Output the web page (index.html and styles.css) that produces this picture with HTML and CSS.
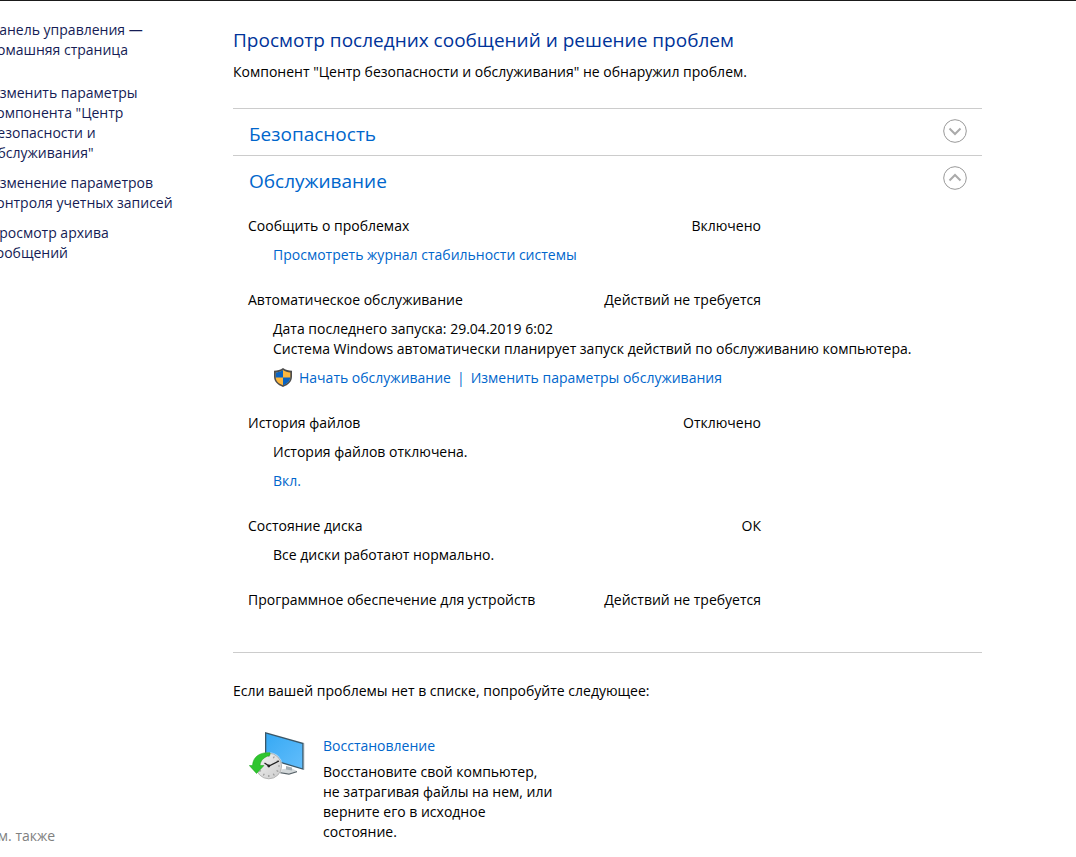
FILE: index.html
```html
<!DOCTYPE html>
<html lang="ru">
<head>
  <meta charset="UTF-8">
  <meta name="viewport" content="width=device-width, initial-scale=1.0">
  <title>Центр безопасности и обслуживания</title>
  <link rel="stylesheet" href="styles.css">
</head>
<body>
  <div class="page">
    <aside class="sidebar">
      <nav class="side-nav">
        <a href="#" class="home-link">Панель управления —<br>домашняя страница</a>
        <a href="#">Изменить параметры<br>компонента "Центр<br>безопасности и<br>обслуживания"</a>
        <a href="#">Изменение параметров<br>контроля учетных записей</a>
        <a href="#">Просмотр архива<br>сообщений</a>
      </nav>
      <p class="see-also">См. также</p>
    </aside>

    <main class="content">
      <h1>Просмотр последних сообщений и решение проблем</h1>
      <p class="intro">Компонент "Центр безопасности и обслуживания" не обнаружил проблем.</p>

      <section class="group">
        <div class="group-header">
          <h2>Безопасность</h2>
          <button type="button" class="toggle" aria-label="Развернуть" aria-expanded="false">
            <svg viewBox="0 0 24 24" width="24" height="24">
              <circle cx="12" cy="12" r="11.3" />
              <path d="M6.5 9.5l5.5 5.5 5.5-5.5" />
            </svg>
          </button>
        </div>
      </section>

      <section class="group">
        <div class="group-header">
          <h2>Обслуживание</h2>
          <button type="button" class="toggle" aria-label="Свернуть" aria-expanded="true">
            <svg viewBox="0 0 24 24" width="24" height="24">
              <circle cx="12" cy="12" r="11.3" />
              <path d="M6.5 14.5l5.5-5.5 5.5 5.5" />
            </svg>
          </button>
        </div>
        <div class="group-body">
          <div class="item">
            <div class="item-row"><h3>Сообщить о проблемах</h3><span>Включено</span></div>
            <p class="item-text"><a href="#">Просмотреть журнал стабильности системы</a></p>
          </div>
          <div class="item">
            <div class="item-row"><h3>Автоматическое обслуживание</h3><span>Действий не требуется</span></div>
            <p class="item-text">Дата последнего запуска: 29.04.2019 6:02<br>Система Windows автоматически планирует запуск действий по обслуживанию компьютера.</p>
            <p class="item-text item-links">
              <svg class="shield" viewBox="0 0 20 20" width="20" height="20">
                <path fill="#4d4d4d" d="M10 0C7.500 1.800 4.500 2.800 1 2.800v5.700c0 5 3.500 8.300 9 10.500 5.500-2.200 9-5.500 9-10.500V2.800c-3.500 0-6.500-1-9-2.800z" />
                <path fill="#fdb73e" d="M10 2C7.800 3.400 5.300 4.200 2.700 4.400V9c0 4 2.700 6.500 7.300 8.300 4.600-1.800 7.300-4.300 7.300-8.300V4.400C14.700 4.200 12.200 3.400 10 2z" />
                <path fill="#0a63c2" d="M10 2C7.800 3.400 5.300 4.200 2.700 4.400V9.500H10zM10 9.500h7.300c-.3 3.700-2.900 6.100-7.300 7.800z" />
              </svg>
              <a href="#">Начать обслуживание</a>
              <span class="divider">|</span>
              <a href="#">Изменить параметры обслуживания</a>
            </p>
          </div>
          <div class="item">
            <div class="item-row"><h3>История файлов</h3><span>Отключено</span></div>
            <p class="item-text">История файлов отключена.</p>
            <p class="item-text"><a href="#">Вкл.</a></p>
          </div>
          <div class="item">
            <div class="item-row"><h3>Состояние диска</h3><span>ОК</span></div>
            <p class="item-text">Все диски работают нормально.</p>
          </div>
          <div class="item">
            <div class="item-row"><h3>Программное обеспечение для устройств</h3><span>Действий не требуется</span></div>
          </div>
        </div>
      </section>

      <section class="more">
        <p>Если вашей проблемы нет в списке, попробуйте следующее:</p>
        <div class="recovery">
          <svg class="recovery-icon" viewBox="0 0 56 50" width="56" height="50">
            <defs>
              <linearGradient id="screen" x1="0" y1="0" x2="1" y2="1">
                <stop offset="0" stop-color="#36a9f4" />
                <stop offset="1" stop-color="#62bdfb" />
              </linearGradient>
              <linearGradient id="dial" x1="0" y1="0" x2="1" y2="1">
                <stop offset="0" stop-color="#f4f4f4" />
                <stop offset="1" stop-color="#cccccc" />
              </linearGradient>
            </defs>
            <path fill="#d3d8da" d="M31 37.500l11-1.500 6 3-8 2.500-9-1.500z" />
            <path fill="#59646a" d="M31 40l9 1.500 8-2.500v1.300l-8 2.500-9-1.500z" />
            <path fill="#a5afb4" d="M37 34l6 1.500v3l-6-1z" />
            <path fill="#3a5768" d="M16 0l39 11v27L16 26.500z" />
            <path fill="url(#screen)" d="M17.300 1.800L53.300 12v24.200L17.300 25.400z" />
            <path fill="#c9d2d6" d="M54.500 11l1 .3v26.500l-1 .2z" />
            <circle cx="19.800" cy="34" r="13.800" fill="#fff" opacity=".5" />
            <circle cx="19.800" cy="34" r="12.800" fill="url(#dial)" stroke="#a8a8a8" stroke-width=".8" />
            <path fill="none" stroke="#999" stroke-width="1.200" d="M19.800 23v2M19.800 43v2M29 34h2M8.800 34h2M25.300 24.500l-1 1.700M29.300 28.500l-1.700 1M29.300 39.500l-1.700-1M25.300 43.500l-1-1.700M14.300 43.500l1-1.700M10.300 39.500l1.700-1" />
            <path fill="none" stroke="#222" stroke-width="1.300" d="M15.500 31l4.500 3 10-5" />
            <circle cx="19.800" cy="34" r="1.400" fill="#222" />
            <path fill="#2fc52f" stroke="#16a316" stroke-width=".5" d="M21 20.700C11 20 4 24.500 3.500 33.500H.3L7.500 41.500 15 33.500h-4c.3-5 4-8.500 10-10.300z" />
          </svg>
          <div class="recovery-text">
            <a href="#">Восстановление</a>
            <p>Восстановите свой компьютер,<br>не затрагивая файлы на нем, или<br>верните его в исходное<br>состояние.</p>
          </div>
        </div>
      </section>
    </main>
  </div>
</body>
</html>
```
FILE: styles.css
```css
* {
  margin: 0;
  padding: 0;
  box-sizing: border-box;
}
body {
  font-family: 'Open Sans', 'Noto Sans', sans-serif;
  font-size: 14px;
  line-height: 20px;
  color: #000;
  background: #fff;
  overflow-x: hidden;
}
a {
  color: #0066cc;
  text-decoration: none;
}
a:hover {
  text-decoration: underline;
}
.page {
  display: flex;
  min-height: 100vh;
  border-top: 1px solid #1a1a1a;
}
/* the pane is scrolled a little past the left edge */
.sidebar {
  display: flex;
  flex-direction: column;
  justify-content: space-between;
  flex: 0 0 244px;
  margin-left: -11px;
  padding: 19px 0 11px;
}
.side-nav {
  display: flex;
  flex-direction: column;
  gap: 10px;
}
.side-nav a {
  color: #151c55;
  white-space: nowrap;
}
.side-nav .home-link {
  margin-bottom: 13px;
}
.see-also {
  color: #808080;
}
.content {
  flex: 1;
  min-width: 0;
  margin-right: 94px;
  padding-top: 25px;
}
h1, h2, h3 {
  font-weight: 400;
}
h1 {
  font-size: 19px;
  line-height: 28px;
  color: #003399;
}
.intro {
  margin: 8px 0 26px;
}
.group {
  border-top: 1px solid #ccc;
}
.group-header {
  display: flex;
  justify-content: space-between;
  align-items: flex-start;
  height: 46px;
  padding: 10px 15px 0 16px;
}
.group-header h2 {
  padding-top: 1px;
  font-size: 19px;
  line-height: 28px;
  color: #0066cc;
}
.toggle {
  width: 24px;
  height: 24px;
  border: none;
  background: none;
  cursor: pointer;
}
.toggle svg {
  display: block;
  fill: none;
  stroke: #999;
  stroke-width: 1;
}
.toggle path {
  stroke: #aaa;
  stroke-width: 2;
}
.group-body {
  display: flex;
  flex-direction: column;
  gap: 25px;
  padding: 14px 15px 42px;
  border-bottom: 1px solid #ccc;
}
.item {
  display: flex;
  flex-direction: column;
  gap: 9px;
}
.item-row {
  display: flex;
  justify-content: space-between;
  max-width: 513px;
}
.item-row h3 {
  font-size: 14px;
}
.item-text {
  padding-left: 25px;
}
.item-links {
  display: flex;
  align-items: center;
}
.shield {
  margin-right: 6px;
}
.divider {
  padding: 0 6px;
  color: #0066cc;
}
.more {
  padding: 28px 0 14px;
}
.recovery {
  display: flex;
  gap: 18px;
  padding: 31px 0 0 16px;
}
.recovery-text {
  padding-top: 4px;
}
.recovery-text p {
  margin-top: 6px;
}
```
